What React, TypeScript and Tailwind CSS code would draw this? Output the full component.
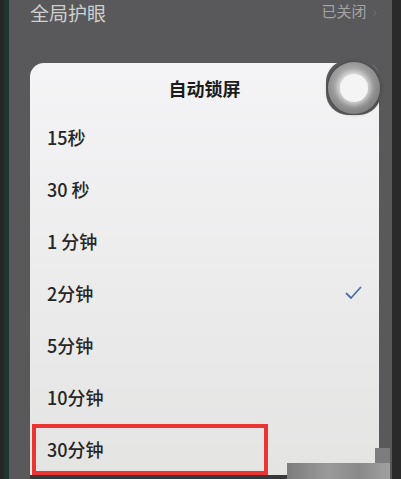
import React from 'react'

const options = ['15秒', '30 秒', '1 分钟', '2分钟', '5分钟', '10分钟', '30分钟']
const selected = '2分钟'
const marked = '30分钟'

const font = { fontFamily: '"Noto Sans CJK SC", "Noto Sans", sans-serif' }

function Tick() {
  return (
    <svg width="17" height="14" viewBox="0 0 17 14" fill="none">
      <polyline
        points="1.5,7.5 6,12 15.5,1.5"
        stroke="#4f70a6"
        strokeWidth="1.8"
        strokeLinecap="round"
        strokeLinejoin="round"
      />
    </svg>
  )
}

function FloatingBall() {
  return (
    <div className="absolute right-[-2px] top-[-3px] flex h-[55px] w-[55px] items-center justify-center rounded-[22px] bg-[#5d5d5f]">
      <div className="flex h-[52px] w-[52px] items-center justify-center rounded-full bg-[radial-gradient(circle_at_45%_40%,#c9c9c9_0%,#9a9a9a_45%,#6a6a6a_100%)] shadow-[0_0_4px_rgba(0,0,0,0.4)]">
        <div className="h-[28px] w-[28px] rounded-full bg-[#f4f4f4] shadow-[0_0_5px_3px_rgba(255,255,255,0.55)]" />
      </div>
    </div>
  )
}

export default function App() {
  return (
    <div
      className="relative flex h-[479px] w-[401px] overflow-hidden bg-[#59595b]"
      style={font}
    >
      {/* phone bezel, left */}
      <div className="w-[4px] bg-[#262626]" />
      <div className="w-[5px] bg-[#1f3531]" />

      <div className="flex flex-1 flex-col pl-[21px] pr-[13px]">
        {/* settings row behind the dialog */}
        <div className="flex h-[63px] items-start justify-between pr-[2px] pt-[1px]">
          <span className="text-[19px] leading-[24px] text-[#cfcfcf]">全局护眼</span>
          <div className="flex items-center gap-[6px]">
            <span className="text-[15px] leading-[20px] text-[#a3a3a3]">已关闭</span>
            <span className="text-[15px] leading-[20px] text-[#707072]">›</span>
          </div>
        </div>

        {/* auto-lock dialog */}
        <div className="relative flex h-[412px] flex-col rounded-t-[14px] bg-[linear-gradient(180deg,#f4f4f6_0%,#ededee_45%,#e4e4e3_100%)]">
          <FloatingBall />
          <div className="flex h-[49px] items-center justify-center pt-[2px]">
            <span className="text-[18px] font-bold text-[#1c1c1c]">自动锁屏</span>
          </div>

          {options.map((label) =>
            label === marked ? (
              <div key={label} className="flex h-[52px] items-center pl-[2px]">
                <div className="flex h-[51px] w-[236px] items-center border-4 border-[#ea3532] pl-[11px]">
                  <span className="text-[18px] font-medium text-[#262626]">{label}</span>
                </div>
              </div>
            ) : (
              <div key={label} className="flex h-[52px] items-center justify-between pl-[17px] pr-[17px]">
                <span className="text-[18px] font-medium text-[#262626]">{label}</span>
                {label === selected && <Tick />}
              </div>
            )
          )}
        </div>
        <div className="h-[4px] bg-[#38383a]" />
      </div>

      {/* phone bezel, right */}
      <div className="w-[9px] bg-[#2a2a2b]" />

      {/* blurred watermark strip */}
      <div className="absolute bottom-0 left-[287px] h-[16px] w-[103px] bg-[linear-gradient(90deg,#7c7c7c,#9a9a9a_40%,#8a8a8a_70%,#a0a0a0)]" />
      <div className="absolute bottom-[16px] left-[375px] h-[15px] w-[15px] bg-[#7d7d7f]" />
    </div>
  )
}
